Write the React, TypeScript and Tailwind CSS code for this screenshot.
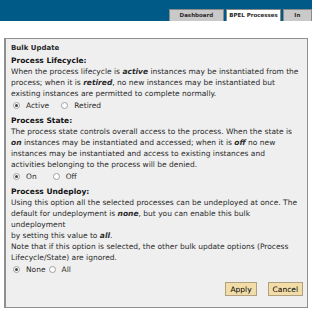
import React from "react";

function Radio({ checked }: { checked?: boolean }) {
  return (
    <span className="inline-flex items-center justify-center w-[7px] h-[7px] rounded-full border border-[#a0a0a0] bg-white mr-[6px]">
      {checked && <span className="w-[3px] h-[3px] rounded-full bg-[#444]" />}
    </span>
  );
}

function Option({ label, checked, className }: { label: string; checked?: boolean; className?: string }) {
  return (
    <span className={`inline-flex items-center ${className ?? ""}`}>
      <Radio checked={checked} />
      {label}
    </span>
  );
}

export default function App() {
  return (
    <div className="w-[312px] h-[320px] bg-white font-['DejaVu_Sans',Verdana,sans-serif] text-[#2a2a2a] overflow-hidden">
      <div className="h-[21px] bg-[#005a88] flex items-end pl-[169px]">
        <div className="h-[12px] w-[59px] bg-[#c9c9c9] border border-b-0 border-[#8a8a8a] text-[5.5px] font-bold flex items-center justify-center">
          Dashboard
        </div>
        <div className="h-[12px] w-[60px] ml-[2px] bg-white border border-b-0 border-[#8a8a8a] text-[5.5px] font-bold flex items-center justify-center">
          BPEL Processes
        </div>
        <div className="h-[12px] w-[30px] ml-[2px] bg-[#c9c9c9] border border-b-0 border-[#8a8a8a] text-[5.5px] font-bold flex items-center pl-[10px]">
          In
        </div>
      </div>

      <div className="mx-[4px] mt-[17px] h-[270px] bg-[#efefef] border border-[#8f8f8f] border-l-2 pl-[5px] pr-[7px] text-[7.5px] leading-[11px]">
        <div className="font-bold text-[7px] pt-[4px] pb-[1px]">Bulk Update</div>

        <div className="font-bold text-[#111]">Process Lifecycle:</div>
        <p>
          When the process lifecycle is <b><i>active</i></b> instances may be instantiated from the process; when it is{" "}
          <b><i>retired</i></b>, no new instances may be instantiated but existing instances are permitted to complete normally.
        </p>
        <div className="flex items-center pl-[2px] pt-[1px] pb-[4px]">
          <Option label="Active" checked />
          <Option label="Retired" className="ml-[12px]" />
        </div>

        <div className="font-bold text-[#111]">Process State:</div>
        <p>
          The process state controls overall access to the process. When the state is <b><i>on</i></b> instances may be
          instantiated and accessed; when it is <b><i>off</i></b> no new instances may be instantiated and access to existing
          instances and activities belonging to the process will be denied.
        </p>
        <div className="flex items-center pl-[2px] pt-[1px] pb-[4px]">
          <Option label="On" checked />
          <Option label="Off" className="ml-[16px]" />
        </div>

        <div className="font-bold text-[#111]">Process Undeploy:</div>
        <p>
          Using this option all the selected processes can be undeployed at once. The default for undeployment is{" "}
          <b><i>none</i></b>, but you can enable this bulk undeployment
          <br />
          by setting this value to <b><i>all</i></b>.
          <br />
          Note that if this option is selected, the other bulk update options (Process Lifecycle/State) are ignored.
        </p>
        <div className="flex items-center pl-[2px] pt-[1px]">
          <Option label="None" checked />
          <Option label="All" className="ml-[3px]" />
        </div>

        <div className="flex justify-end gap-[11px] mt-[7px] -mr-[3px]">
          <button className="h-[14px] px-[4px] bg-[#f2dca8] border border-[#b0a080] text-[7.5px] text-black">Apply</button>
          <button className="h-[14px] px-[4px] bg-[#f2dca8] border border-[#b0a080] text-[7.5px] text-black">Cancel</button>
        </div>
      </div>
    </div>
  );
}
